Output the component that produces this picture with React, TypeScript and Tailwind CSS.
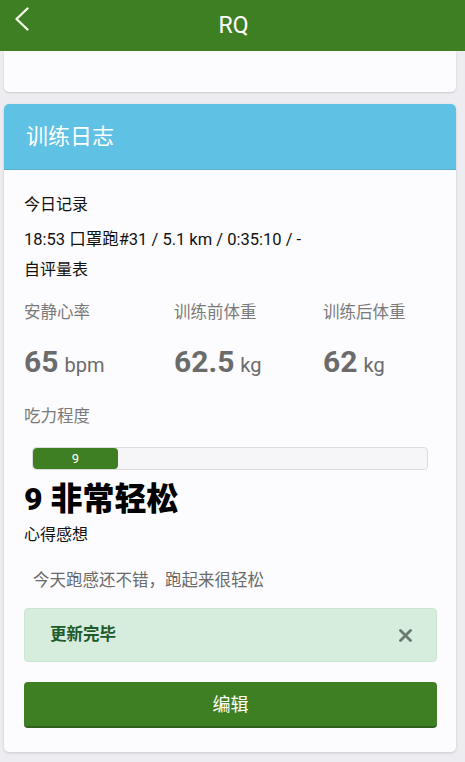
import React from "react";

const font = { fontFamily: "Roboto, 'Noto Sans CJK SC', sans-serif" } as React.CSSProperties;

export default function App() {
  return (
    <div className="w-[465px] h-[762px] bg-[#ededf1] overflow-hidden" style={font}>
      <header className="relative h-[51px] bg-[#3f7f24] flex items-center justify-center">
        <svg className="absolute left-[13px] top-[6px]" width="18" height="26" viewBox="0 0 18 26" fill="none">
          <path d="M14.5 2.5 L3.5 13 L14.5 23.5" stroke="#f4f7e6" strokeWidth="2.4" strokeLinecap="round" strokeLinejoin="round" />
        </svg>
        <span className="text-[23px] text-white leading-none ml-[2px]">RQ</span>
      </header>
      <div className="pl-[4px] pr-[9px]">
        <div className="h-[41px] bg-[#fcfcfe] rounded-b-[5px] shadow-[0_1px_2px_rgba(0,0,0,0.15)]" />
        <div className="mt-[12px] bg-[#fcfcfe] rounded-[5px] shadow-[0_1px_3px_rgba(0,0,0,0.15)] overflow-hidden">
          <div className="h-[66px] bg-[#5fc1e4] flex items-center pl-[22px] border-b border-[#57b0d0]">
            <span className="text-[22px] text-white">训练日志</span>
          </div>
          <div className="pl-[20px] pr-[19px] pt-[23px] pb-[24px]">
            <div className="text-[16px] leading-[24px] text-[#111]">今日记录</div>
            <div className="mt-[11px] text-[16.5px] leading-[24px] text-[#111]">18:53 口罩跑#31 / 5.1 km / 0:35:10 / -</div>
            <div className="mt-[6px] text-[16px] leading-[24px] text-[#111]">自评量表</div>
            <div className="grid grid-cols-[150px_149px_1fr] mt-[19px]">
              {[
                ["安静心率", "65", "bpm"],
                ["训练前体重", "62.5", "kg"],
                ["训练后体重", "62", "kg"],
              ].map(([l, v, u]) => (
                <div key={l}>
                  <div className="text-[16.5px] leading-[24px] text-[#7a7a7a]">{l}</div>
                  <div className="mt-[17px] leading-[40px] text-[#6b6b6b]">
                    <span className="text-[30px] font-bold">{v}</span>
                    <span className="text-[20px] ml-[6px]">{u}</span>
                  </div>
                </div>
              ))}
            </div>
            <div className="mt-[18px] text-[16.5px] leading-[24px] text-[#7a7a7a]">吃力程度</div>
            <div className="mt-[18px] ml-[8px] mr-[9px] h-[23px] rounded-[4px] bg-[#f6f6f8] border border-[#dcdcdf] overflow-hidden">
              <div className="h-full w-[85px] bg-[#3f7f24] rounded-[4px] flex items-center justify-center text-white text-[13px]">9</div>
            </div>
            <div className="mt-[9px] text-[32px] leading-[40px] font-black text-black">9 非常轻松</div>
            <div className="mt-[4px] text-[16px] leading-[24px] text-[#111]">心得感想</div>
            <div className="mt-[22px] pl-[9px] text-[16.5px] leading-[24px] text-[#6a6a6a]">今天跑感还不错，跑起来很轻松</div>
            <div className="mt-[15px] h-[54px] rounded-[4px] bg-[#d6ecdd] border border-[#c9e6d1] flex items-center justify-between pl-[25px] pr-[24px]">
              <span className="text-[16.5px] font-bold text-[#1d5a2c]">更新完毕</span>
              <svg width="13" height="13" viewBox="0 0 13 13">
                <path d="M1.5 1.5 L11.5 11.5 M11.5 1.5 L1.5 11.5" stroke="#6b7a70" strokeWidth="2.8" strokeLinecap="round" />
              </svg>
            </div>
            <button className="mt-[20px] w-full h-[46px] rounded-[4px] bg-[#3f7f24] border-b-2 border-[#2f5f1b] text-white text-[18px] flex items-center justify-center">
              编辑
            </button>
          </div>
        </div>
      </div>
    </div>
  );
}
